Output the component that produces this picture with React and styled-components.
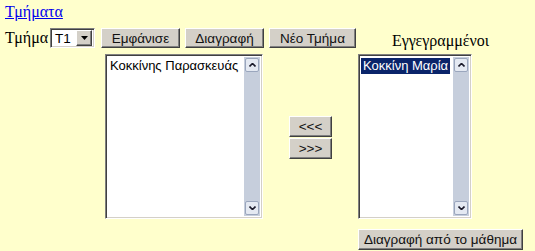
import React from 'react';
import styled, { createGlobalStyle } from 'styled-components';

const GlobalStyle = createGlobalStyle`
  html, body {
    margin: 0;
    padding: 0;
    background: #ffffcc;
  }
`;

const Page = styled.div`
  width: 535px;
  height: 251px;
  box-sizing: border-box;
  padding: 3px 0 0 5px;
  background: #ffffcc;
  display: grid;
  grid-template-columns: 96px 257px 165px;
  grid-template-rows: auto auto auto auto;
  align-content: start;
  font-family: 'Liberation Sans', Arial, sans-serif;
`;

const TopLink = styled.a`
  grid-column: 1 / -1;
  font-family: 'Liberation Serif', 'Times New Roman', serif;
  font-size: 16px;
  line-height: 18px;
  height: 18px;
  color: #0000ee;
  text-decoration: underline;
  justify-self: start;
`;

const Row = styled.div`
  display: flex;
  align-items: center;
  height: 20px;
  gap: ${(p) => p.$gap || 0}px;
  margin-top: 7px;
`;

const Label = styled.span`
  font-family: 'Liberation Serif', 'Times New Roman', serif;
  font-size: 16px;
  color: #000;
  margin-right: 2px;
`;

const Heading = styled.div`
  margin-top: 11px;
  font-family: 'Liberation Serif', 'Times New Roman', serif;
  font-size: 16px;
  line-height: 18px;
  text-align: center;
  color: #000;
`;

const SelectBox = styled.div`
  width: 45px;
  height: 20px;
  box-sizing: border-box;
  background: #fff;
  border-top: 1px solid #808080;
  border-left: 1px solid #808080;
  border-right: 1px solid #fff;
  border-bottom: 1px solid #fff;
  box-shadow: inset 1px 1px #404040, inset -1px -1px #d4d0c8;
  display: flex;
  align-items: center;
  padding: 2px;
  font-size: 13.5px;
`;

const SelectText = styled.span`
  flex: 1;
  padding-left: 2px;
`;

const DropButton = styled.span`
  width: 16px;
  height: 16px;
  box-sizing: border-box;
  background: #d4d0c8;
  border-top: 1px solid #fff;
  border-left: 1px solid #fff;
  border-right: 1px solid #404040;
  border-bottom: 1px solid #404040;
  box-shadow: inset -1px -1px #808080;
  display: flex;
  align-items: center;
  justify-content: center;
`;

const Button = styled.button`
  width: ${(p) => p.$w}px;
  height: ${(p) => p.$h || 20}px;
  box-sizing: border-box;
  padding: 0;
  margin: 0;
  background: #d4d0c8;
  border-top: 1px solid #fff;
  border-left: 1px solid #fff;
  border-right: 1px solid #404040;
  border-bottom: 1px solid #404040;
  box-shadow: inset -1px -1px #808080;
  font-family: 'Liberation Sans', Arial, sans-serif;
  font-size: 13.5px;
  color: #111;
  cursor: default;
`;

const ListArea = styled.div`
  display: flex;
  margin-top: 4px;
`;

const ListBox = styled.div`
  width: ${(p) => p.$w}px;
  height: 165px;
  box-sizing: border-box;
  background: #fff;
  border-top: 1px solid #808080;
  border-left: 1px solid #808080;
  border-right: 1px solid #fff;
  border-bottom: 1px solid #fff;
  box-shadow: inset 1px 1px #404040, inset -1px -1px #d4d0c8;
  display: flex;
  padding: 2px;
  margin-left: ${(p) => p.$left || 0}px;
`;

const Items = styled.div`
  flex: 1;
  padding-top: 1px;
  overflow: hidden;
`;

const Item = styled.div`
  width: fit-content;
  height: 16px;
  line-height: 16px;
  font-size: 13px;
  padding: 0 2px;
  white-space: nowrap;
  background: ${(p) => (p.$selected ? '#0a246a' : 'transparent')};
  color: ${(p) => (p.$selected ? '#fff' : '#000')};
`;

const ScrollBar = styled.div`
  width: 16px;
  background: #c6cedc;
  display: flex;
  flex-direction: column;
  justify-content: space-between;
  padding: 1px 0;
  box-sizing: border-box;
`;

const ScrollArrow = styled.div`
  width: 14px;
  height: 14px;
  margin: 0 auto;
  box-sizing: border-box;
  background: #e4e9f2;
  border: 1px solid #9aa6bd;
  border-radius: 2px;
  display: flex;
  align-items: center;
  justify-content: center;
`;

const Middle = styled.div`
  flex: 1;
  display: flex;
  flex-direction: column;
  align-items: center;
  justify-content: center;
  gap: 1px;
  padding-top: 2px;
`;

const BottomCell = styled.div`
  grid-column: 3;
  margin-top: 10px;
`;

const Chevron = ({ up }) => (
  <svg width="7" height="4" viewBox="0 0 7 4">
    <polyline
      points={up ? '0.5,3.5 3.5,0.5 6.5,3.5' : '0.5,0.5 3.5,3.5 6.5,0.5'}
      fill="none"
      stroke="#1a1a2a"
      strokeWidth="1.6"
    />
  </svg>
);

const Arrow = () => (
  <svg width="7" height="4" viewBox="0 0 7 4">
    <polygon points="0,0 7,0 3.5,4" fill="#000" />
  </svg>
);

const Scroll = () => (
  <ScrollBar>
    <ScrollArrow>
      <Chevron up />
    </ScrollArrow>
    <ScrollArrow>
      <Chevron />
    </ScrollArrow>
  </ScrollBar>
);

export default function App() {
  return (
    <>
      <GlobalStyle />
      <Page>
        <TopLink href="#">Τμήματα</TopLink>

        <Row>
          <Label>Τμήμα</Label>
          <SelectBox>
            <SelectText>T1</SelectText>
            <DropButton>
              <Arrow />
            </DropButton>
          </SelectBox>
        </Row>
        <Row $gap={5}>
          <Button $w={79}>Εμφάνισε</Button>
          <Button $w={79}>Διαγραφή</Button>
          <Button $w={87}>Νέο Τμήμα</Button>
        </Row>
        <Heading>Εγγεγραμμένοι</Heading>

        <div />
        <ListArea>
          <ListBox $w={158} $left={4}>
            <Items>
              <Item>Κοκκίνης Παρασκευάς</Item>
            </Items>
            <Scroll />
          </ListBox>
          <Middle>
            <Button $w={43} $h={21}>&lt;&lt;&lt;</Button>
            <Button $w={43} $h={21}>&gt;&gt;&gt;</Button>
          </Middle>
        </ListArea>
        <ListArea>
          <ListBox $w={114}>
            <Items>
              <Item $selected>Κοκκίνη Μαρία</Item>
            </Items>
            <Scroll />
          </ListBox>
        </ListArea>

        <BottomCell>
          <Button $w={165} $h={21}>Διαγραφή από το μάθημα</Button>
        </BottomCell>
      </Page>
    </>
  );
}
